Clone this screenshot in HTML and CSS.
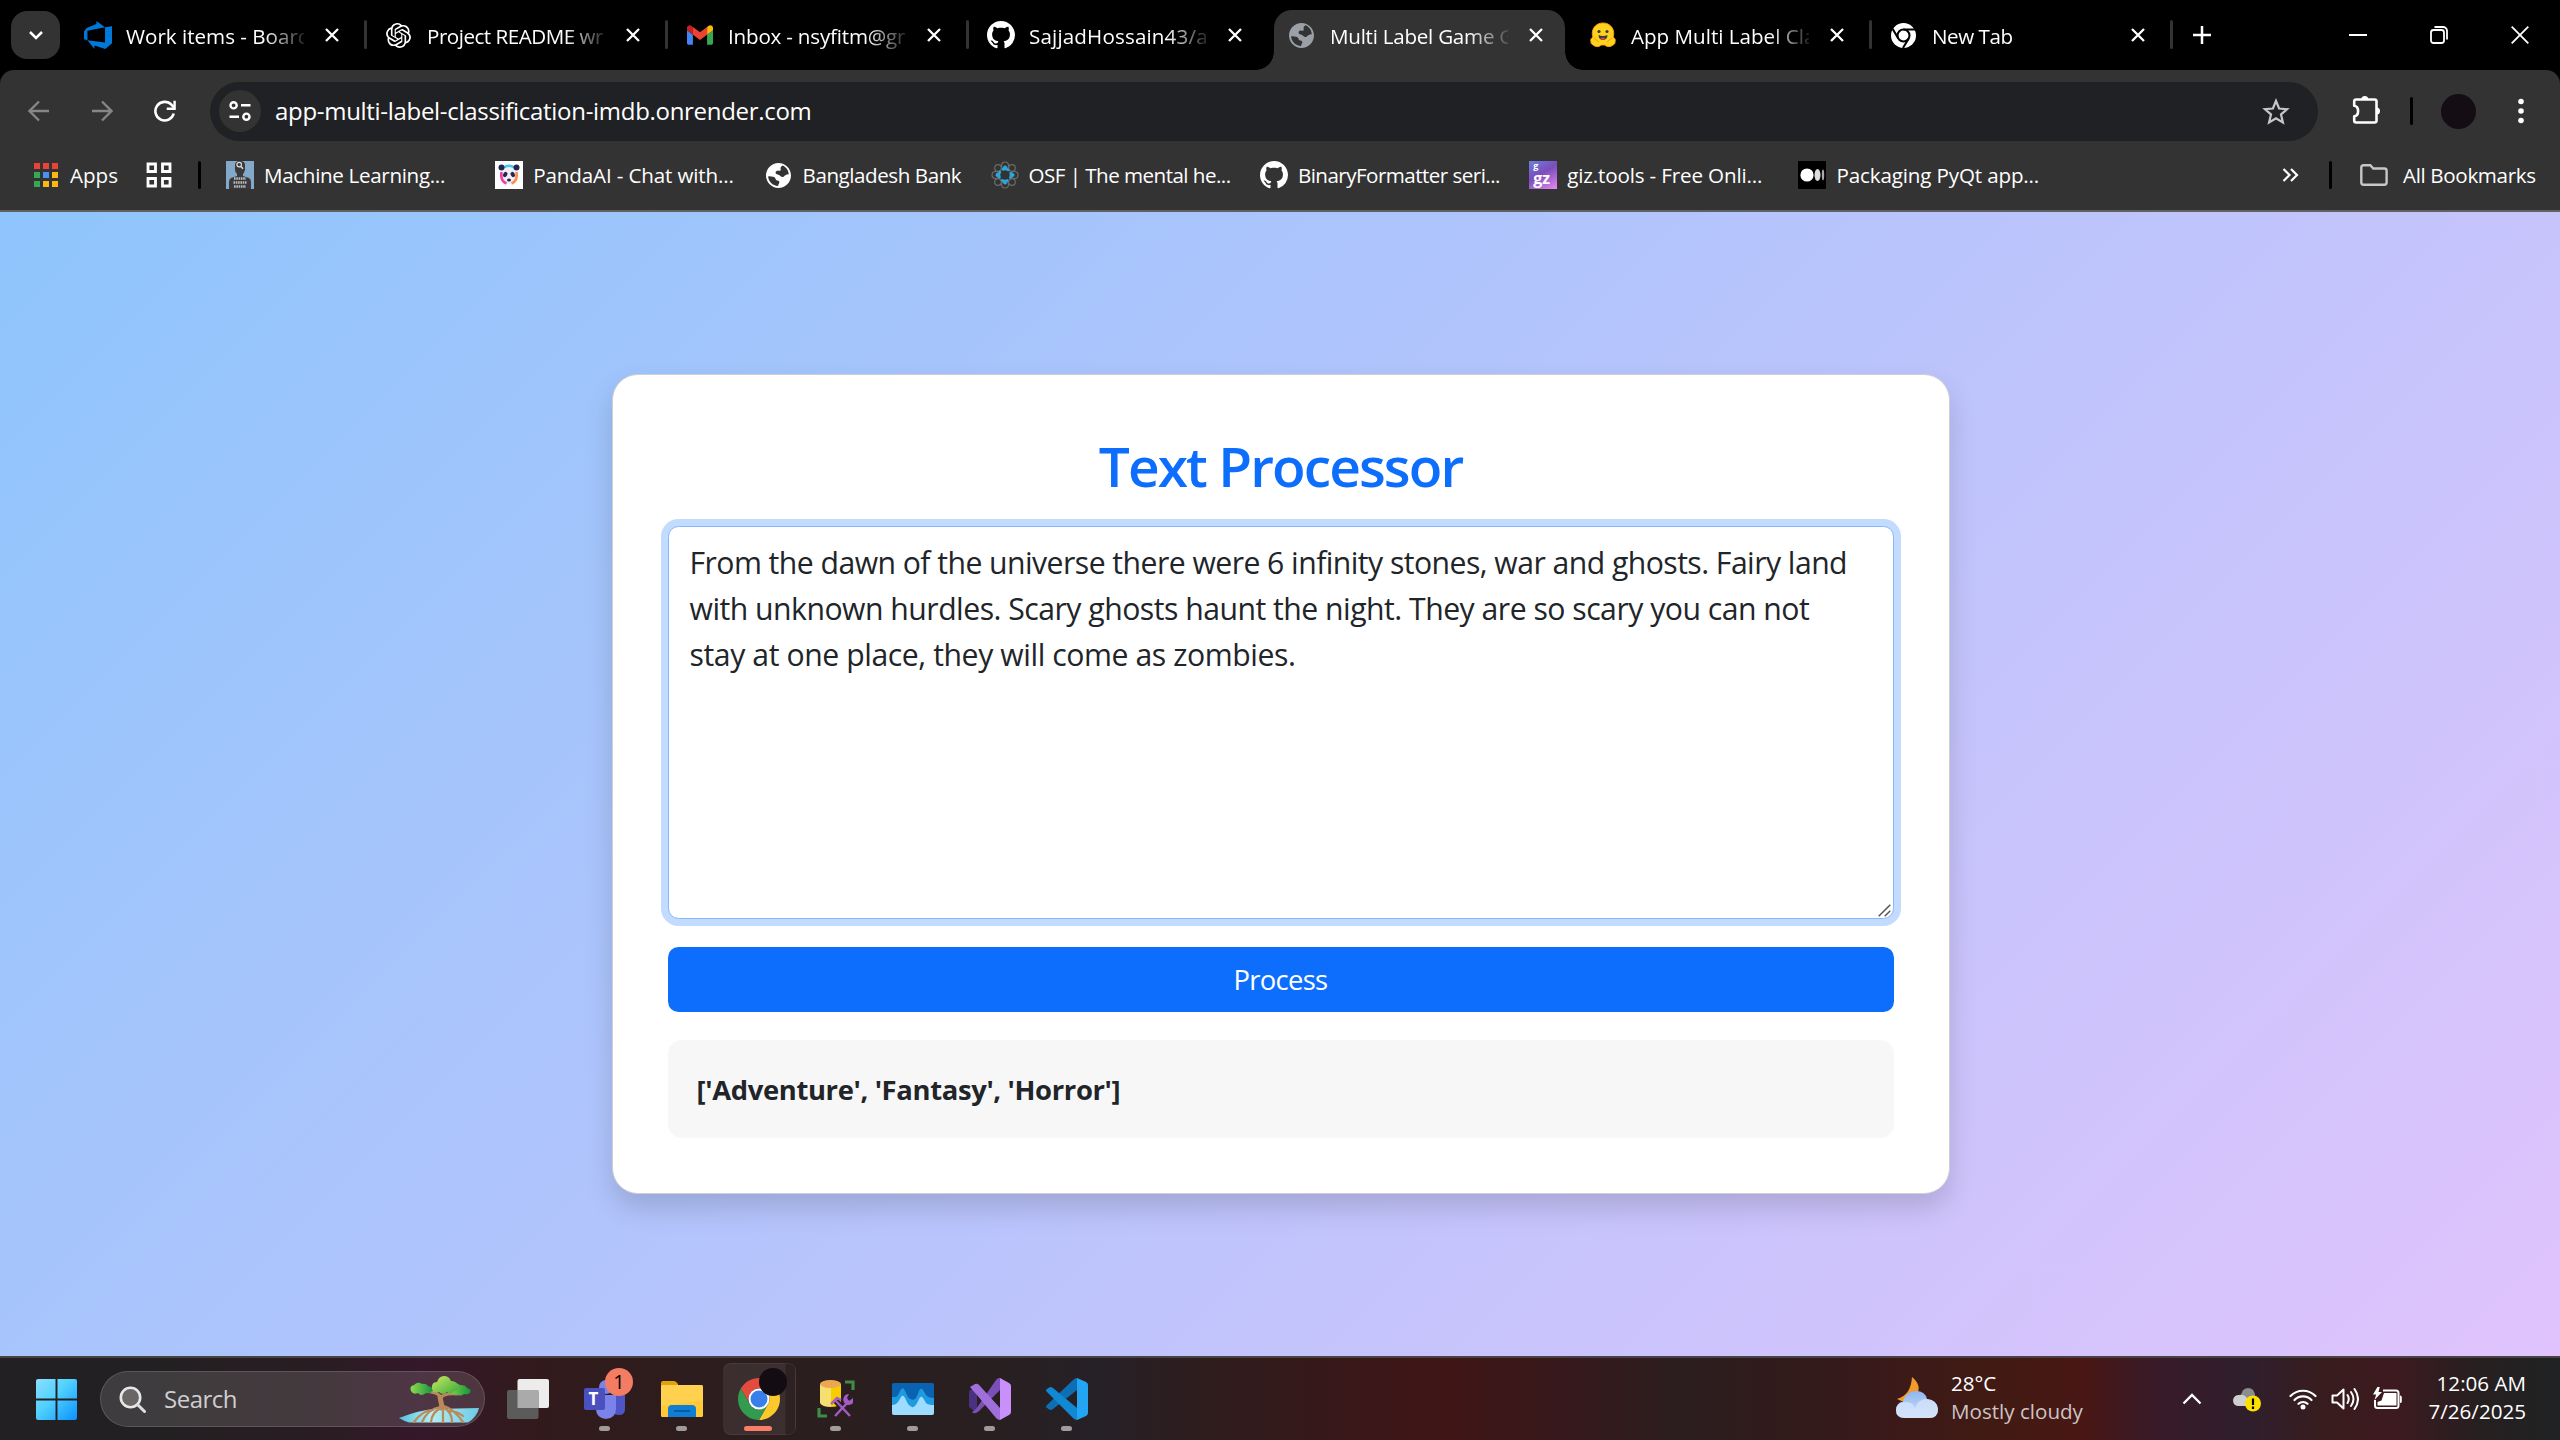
FILE: index.html
```html
<!DOCTYPE html>
<html lang="en">
<head>
<meta charset="utf-8">
<title>Multi Label Game Classification</title>
<link rel="stylesheet" href="styles.css">
</head>
<body>
<svg class="defs" width="0" height="0" aria-hidden="true">
  <symbol id="github" viewBox="0 0 16 16"><path fill="#fff" d="M8 0C3.58 0 0 3.58 0 8c0 3.54 2.29 6.53 5.47 7.59.4.07.55-.17.55-.38 0-.19-.01-.82-.01-1.49-2.01.37-2.53-.49-2.69-.94-.09-.23-.48-.94-.82-1.13-.28-.15-.68-.52-.01-.53.63-.01 1.08.58 1.23.82.72 1.21 1.87.87 2.33.66.07-.52.28-.87.51-1.07-1.78-.2-3.64-.89-3.64-3.95 0-.87.31-1.59.82-2.15-.08-.2-.36-1.02.08-2.12 0 0 .67-.21 2.2.82.64-.18 1.32-.27 2-.27s1.36.09 2 .27c1.53-1.04 2.2-.82 2.2-.82.44 1.1.16 1.92.08 2.12.51.56.82 1.27.82 2.15 0 3.07-1.87 3.75-3.65 3.95.29.25.54.73.54 1.48 0 1.07-.01 1.93-.01 2.2 0 .21.15.46.55.38A8.01 8.01 0 0 0 16 8c0-4.42-3.58-8-8-8z"/></symbol>
  <symbol id="globe" viewBox="2 2 20 20"><path fill="currentColor" d="M12 2C6.48 2 2 6.48 2 12s4.48 10 10 10 10-4.480 10-10S17.520 2 12 2zm-.3 18.300C7.200 20.100 3.900 16.700 3.700 12.500c1.500.3 3.500.1 4.800.7 1.100.5 1 2 1.900 2.500.8.4 2.300.2 2.300 1.400 0 1.300-1 1.700-1 3.200zm4.600-7.600c-1.400 1-2.400.2-3.200-.7-.9-1-2.300-.7-3.100-1.500-.9-1 .1-2.300 1.300-2.400 1-.1 1.700.6 2.300-.2.600-.9-.4-1.500.2-2.600.3-.6.9-1 1.400-1.400 2.900 1.100 5 4 5 7.300-1.100-.6-2.600.6-3.900 1.500z"/></symbol>
  <symbol id="close" viewBox="0 0 14 14"><path d="M1 1l12 12M13 1L1 13" stroke="#fff" stroke-width="2.300" fill="none"/></symbol>
</svg>

<header class="tabstrip">
  <button class="tab-search"><svg width="16" height="10" viewBox="0 0 16 10"><path d="M2 2l6 6 6-6" fill="none" stroke="#fff" stroke-width="2.500"/></svg></button>
  <div class="tabs">
    <div class="tab">
      <svg class="fav" width="28" height="28" viewBox="0 0 24 24"><path fill="#0078d7" d="M0 8.899l2.247-2.966 8.405-3.416V.045l7.370 5.393L2.966 8.360v8.224L0 15.730zm24-4.450v14.652L18.247 24l-9.303-3.056V24l-5.978-7.416 15.057 1.798V5.438z"/></svg>
      <span class="tab-title"><span class="t">Work items - Board</span></span><svg class="x" width="14" height="14"><use href="#close"/></svg>
    </div>
    <div class="tab">
      <svg class="fav" width="25" height="25" viewBox="0 0 24 24"><path fill="#fff" d="M22.2819 9.8211a5.9847 5.9847 0 0 0-.5157-4.9108 6.0462 6.0462 0 0 0-6.5098-2.9A6.0651 6.0651 0 0 0 4.9807 4.1818a5.9847 5.9847 0 0 0-3.9977 2.9 6.0462 6.0462 0 0 0 .7427 7.0966 5.98 5.98 0 0 0 .511 4.9107 6.051 6.051 0 0 0 6.5146 2.9001A5.9847 5.9847 0 0 0 13.2599 24a6.0557 6.0557 0 0 0 5.7718-4.2058 5.9894 5.9894 0 0 0 3.9977-2.9001 6.0557 6.0557 0 0 0-.7475-7.0729zm-9.022 12.6081a4.4755 4.4755 0 0 1-2.8764-1.0408l.1419-.0804 4.7783-2.7582a.7948.7948 0 0 0 .3927-.6813v-6.7369l2.02 1.1686a.071.071 0 0 1 .038.052v5.5826a4.504 4.504 0 0 1-4.4945 4.4944zm-9.6607-4.1254a4.4708 4.4708 0 0 1-.5346-3.0137l.142.0852 4.783 2.7582a.7712.7712 0 0 0 .7806 0l5.8428-3.3685v2.3324a.0804.0804 0 0 1-.0332.0615L9.74 19.9502a4.4992 4.4992 0 0 1-6.1408-1.6464zM2.3408 7.8956a4.485 4.485 0 0 1 2.3655-1.9728V11.6a.7664.7664 0 0 0 .3879.6765l5.8144 3.3543-2.0201 1.1685a.0757.0757 0 0 1-.071 0l-4.8303-2.7865A4.504 4.504 0 0 1 2.3408 7.872zm16.5963 3.8558L13.1038 8.364 15.1192 7.2a.0757.0757 0 0 1 .071 0l4.8303 2.7913a4.4944 4.4944 0 0 1-.6765 8.1042v-5.6772a.79.79 0 0 0-.407-.667zm2.0107-3.0231l-.142-.0852-4.7735-2.7818a.7759.7759 0 0 0-.7854 0L9.409 9.2297V6.8974a.0662.0662 0 0 1 .0284-.0615l4.8303-2.7866a4.4992 4.4992 0 0 1 6.6802 4.66zM8.3065 12.863l-2.02-1.1638a.0804.0804 0 0 1-.038-.0567V6.0742a4.4992 4.4992 0 0 1 7.3757-3.4537l-.142.0805L8.704 5.459a.7948.7948 0 0 0-.3927.6813zm1.0976-2.3654l2.602-1.4998 2.6069 1.4998v2.9994l-2.5974 1.4997-2.6067-1.4997Z"/></svg>
      <span class="tab-title"><span class="t">Project README wr</span></span><svg class="x" width="14" height="14"><use href="#close"/></svg>
    </div>
    <div class="tab">
      <svg class="fav" width="26" height="20" viewBox="52 42 88 66"><path fill="#4285f4" d="M58 108h14V74L52 59v43c0 3.320 2.690 6 6 6"/><path fill="#34a853" d="M120 108h14c3.320 0 6-2.690 6-6V59l-20 15"/><path fill="#fbbc04" d="M120 48v26l20-15v-8c0-7.420-8.470-11.650-14.400-7.200"/><path fill="#ea4335" d="M72 74V48l24 18 24-18v26L96 92"/><path fill="#c5221f" d="M52 51v8l20 15V48l-5.600-4.200c-5.940-4.450-14.400-.22-14.400 7.200"/></svg>
      <span class="tab-title"><span class="t">Inbox - nsyfitm@gr</span></span><svg class="x" width="14" height="14"><use href="#close"/></svg>
    </div>
    <div class="tab no-sep">
      <svg class="fav" width="28" height="28"><use href="#github"/></svg>
      <span class="tab-title"><span class="t">SajjadHossain43/ap</span></span><svg class="x" width="14" height="14"><use href="#close"/></svg>
    </div>
    <div class="tab active">
      <svg class="fav gray" width="25" height="25"><use href="#globe"/></svg>
      <span class="tab-title"><span class="t">Multi Label Game G</span></span><svg class="x" width="14" height="14"><use href="#close"/></svg>
    </div>
    <div class="tab">
      <svg class="fav" width="28" height="28" viewBox="0 0 28 28"><path fill="#ffd21e" stroke="#ff9d0b" stroke-width="1" d="M14 2C7.800 2 3.300 6.500 3.300 12.300c0 1.600.2 2.800.6 3.900-2 1-2.700 3-1.900 4.600-.3 1.500.6 2.600 1.800 3 1.900 2.200 6.600 2.500 8.200.2h4c1.600 2.300 6.300 2 8.200-.2 1.200-.4 2.100-1.500 1.800-3 .8-1.600.1-3.600-1.900-4.600.4-1.100.6-2.300.6-3.900C24.700 6.500 20.200 2 14 2z"/><circle cx="10" cy="10.500" r="1.600" fill="#3a3b45"/><circle cx="18" cy="10.500" r="1.600" fill="#3a3b45"/><path fill="#3a3b45" d="M9.500 14c2.500 1.300 6.500 1.300 9 0 0 3.200-2 5-4.500 5s-4.500-1.800-4.500-5z"/><path fill="#f94040" d="M11.500 17.700c1-1.200 4-1.200 5 0-1.300 1.500-3.700 1.500-5 0z"/><path d="M5 17l5 4M23 17l-5 4" stroke="#ff9d0b" stroke-width="1" fill="none"/></svg>
      <span class="tab-title"><span class="t">App Multi Label Cla</span></span><svg class="x" width="14" height="14"><use href="#close"/></svg>
    </div>
    <div class="tab">
      <svg class="fav" width="25" height="25" viewBox="0 0 48 48"><circle cx="24" cy="24" r="24" fill="#fff"/><circle cx="24" cy="24" r="11.500" fill="none" stroke="#000" stroke-width="4"/><path d="M24 12.500h22M14 29.800L3 11M34 29.800L23 48" stroke="#000" stroke-width="4"/></svg>
      <span class="tab-title"><span class="t">New Tab</span></span><svg class="x" width="14" height="14"><use href="#close"/></svg>
    </div>
  </div>
  <svg class="new-tab" width="18" height="18" viewBox="0 0 18 18"><path d="M9 0v18M0 9h18" stroke="#fff" stroke-width="2.500"/></svg>
  <div class="win-controls">
    <svg width="18" height="18" viewBox="0 0 18 18"><path d="M0 9h18" stroke="#fff" stroke-width="2"/></svg>
    <svg width="18" height="18" viewBox="0 0 18 18"><rect x="1" y="4" width="13" height="13" rx="2.500" fill="none" stroke="#fff" stroke-width="1.800"/><path d="M4.500 1H13a4 4 0 0 1 4 4v8.500" fill="none" stroke="#fff" stroke-width="1.800"/></svg>
    <svg width="18" height="18" viewBox="0 0 18 18"><path d="M.7.7l16.600 16.600M17.300.7L.7 17.300" stroke="#fff" stroke-width="1.800"/></svg>
  </div>
</header>

<section class="chrome-ui">
  <div class="toolbar">
    <div class="nav">
      <svg width="22" height="22" viewBox="0 0 22 22"><path d="M21 11H2M11 1.500L1.500 11l9.500 9.500" fill="none" stroke="#868686" stroke-width="2.300"/></svg>
      <svg width="22" height="22" viewBox="0 0 22 22"><path d="M1 11h19M11 1.500l9.500 9.500-9.500 9.500" fill="none" stroke="#868686" stroke-width="2.300"/></svg>
      <svg width="22" height="22" viewBox="0 0 22 22"><path d="M19.700 13.500a9.300 9.300 0 1 1-2.300-8.800L20 7.300" fill="none" stroke="#fff" stroke-width="2.600"/><path d="M20.600.8v7.900h-7.900" fill="none" stroke="#fff" stroke-width="2.400"/></svg>
    </div>
    <div class="omnibox">
      <span class="site-info"><svg width="22" height="20" viewBox="0 0 22 20"><g fill="none" stroke="#fff" stroke-width="2.400"><circle cx="4.600" cy="4.300" r="3.100"/><path d="M12 4.300h9.500M.5 15.700H10"/><circle cx="17.400" cy="15.700" r="3.100"/></g></svg></span>
      <span class="url"><span class="t">app-multi-label-classification-imdb.onrender.com</span></span>
      <svg class="star" width="28" height="27" viewBox="0 0 28 27"><path d="M14 3l3.100 7.500 8 .7-6.100 5.300 1.900 7.900-6.900-4.200-6.900 4.200L9 16.500l-6.100-5.300 8-.7z" fill="none" stroke="#c7c7c7" stroke-width="2.200"/></svg>
    </div>
    <svg class="ext" width="30" height="30" viewBox="0 0 30 30"><path d="M3.200 10.700V6.500q0-2 2-2h18.300q2 0 2 2v19q0 2-2 2H5.200q-2 0-2-2v-4.200c5.200-.6 5.200-10 0-10.600z" fill="none" stroke="#fff" stroke-width="2.600" stroke-linejoin="round"/><path d="M10.300 4.500a3.500 3.500 0 0 1 7 0zM25.500 12.500a3.500 3.500 0 0 1 0 7z" fill="#fff"/></svg>
    <i class="divider"></i>
    <i class="avatar"></i>
    <svg class="menu" width="6" height="26" viewBox="0 0 6 26"><g fill="#fff"><circle cx="3" cy="3.500" r="2.800"/><circle cx="3" cy="13" r="2.800"/><circle cx="3" cy="22.500" r="2.800"/></g></svg>
  </div>
  <nav class="bookmarks">
    <a class="bm-apps"><svg width="24" height="24" viewBox="0 0 24 24"><path fill="#ea4335" d="M0 0h6v6H0zM9 0h6v6H9zM18 0h6v6h-6z"/><path fill="#34a853" d="M0 9h6v6H0zM0 18h6v6H0z"/><path fill="#4a90f5" d="M9 9h6v6H9z"/><path fill="#fbb713" d="M18 9h6v6h-6zM9 18h6v6H9zM18 18h6v6h-6z"/></svg><span class="t">Apps</span></a>
    <svg class="bm-grid" width="26" height="26" viewBox="0 0 26 26"><path d="M2 2h7.500v7.500H2zM16.500 2H24v7.500h-7.500zM2 16.500h7.500V24H2zM16.500 16.500H24V24h-7.500z" fill="none" stroke="#fff" stroke-width="2.800"/></svg>
    <i class="divider"></i>
    <div class="bm-list">
      <a><svg width="28" height="28" viewBox="0 0 28 28"><path fill="#82a9c9" d="M0 0h28v28H0z"/><path fill="#3a3a3c" d="M9 4q0-4 5-4t5 4v5q-1 3-2 4v2l6 2q2 1 2 4v7H3v-7q0-3 2-4l6-2v-2q-2-2-2-4z"/><circle cx="13.200" cy="3.600" r="2.300" fill="none" stroke="#ddd" stroke-width="1.200"/><path d="M15 5.500l2 2.300" stroke="#ddd" stroke-width="1.500"/><path d="M8 17.500h12M7.500 21.500h13M8 25.500h12" stroke="#bbb" stroke-width="2.400" stroke-dasharray="1.600 .7"/></svg><span class="t">Machine Learning...</span></a>
      <a><svg width="28" height="28" viewBox="0 0 28 28"><path fill="#fff" d="M0 0h28v28H0z"/><circle cx="14" cy="14.500" r="8.500" fill="#f2eef4"/><path d="M6.500 11q-1.500 9 5 11.500" stroke="#f23ba5" stroke-width="2.600" fill="none"/><path d="M21.500 11q1.500 9-5 11.500" stroke="#ff8a4c" stroke-width="2.600" fill="none"/><path d="M8.500 6.500q5.500-3.500 11 0" stroke="#42c9ee" stroke-width="2.600" fill="none"/><circle cx="6.500" cy="6.500" r="3" fill="#232650"/><circle cx="21.500" cy="6.500" r="3" fill="#232650"/><ellipse cx="10.200" cy="13.500" rx="2" ry="2.700" fill="#262650" transform="rotate(30 10.200 13.500)"/><ellipse cx="17.800" cy="13.500" rx="2" ry="2.700" fill="#262650" transform="rotate(-30 17.800 13.500)"/><ellipse cx="14" cy="19" rx="2" ry="1.500" fill="#262650"/></svg><span class="t">PandaAI - Chat with...</span></a>
      <a><svg width="25" height="25" class="white"><use href="#globe"/></svg><span class="t">Bangladesh Bank</span></a>
      <a><svg width="28" height="28" viewBox="0 0 28 28"><g fill="none" stroke="#6b6b6b" stroke-width="1.200"><circle cx="14" cy="4.500" r="3.500"/><circle cx="14" cy="23.500" r="3.500"/><circle cx="4.500" cy="14" r="3.500"/><circle cx="23.500" cy="14" r="3.500"/><circle cx="7" cy="7" r="3.300"/><circle cx="21" cy="7" r="3.300"/><circle cx="7" cy="21" r="3.300"/><circle cx="21" cy="21" r="3.300"/></g><circle cx="14" cy="14" r="6" fill="none" stroke="#2ba8e0" stroke-width="2.600" stroke-dasharray="7.400 2" stroke-dashoffset="3.700"/><g fill="#2ba8e0"><circle cx="14" cy="6.500" r="2"/><circle cx="14" cy="21.500" r="2"/><circle cx="6.500" cy="14" r="2"/><circle cx="21.500" cy="14" r="2"/></g></svg><span class="t">OSF | The mental he...</span></a>
      <a><svg width="28" height="28"><use href="#github"/></svg><span class="t">BinaryFormatter seri...</span></a>
      <a><span class="giz"><small>g</small><b>gz</b></span><span class="t">giz.tools - Free Onli...</span></a>
      <a><svg width="28" height="28" viewBox="0 0 28 28"><path d="M0 0h28v28H0z"/><circle cx="9" cy="14" r="6.600" fill="#fff"/><ellipse cx="19.500" cy="14" rx="3" ry="6" fill="#ddd"/><ellipse cx="25" cy="14" rx="1.200" ry="5.400" fill="#aaa"/></svg><span class="t">Packaging PyQt app...</span></a>
    </div>
    <svg class="more" width="17" height="14" viewBox="0 0 17 14"><path d="M1.500 1l6 6-6 6M9 1l6 6-6 6" fill="none" stroke="#fff" stroke-width="2.200"/></svg>
    <i class="divider"></i>
    <a class="all"><svg width="28" height="22" viewBox="0 0 28 22"><path d="M1.300 18.500v-15Q1.300 1.300 3.500 1.300h6.800l3 3.200h11q2.300 0 2.300 2.200v11.800q0 2.200-2.300 2.200H3.500q-2.200 0-2.200-2.200z" fill="none" stroke="#c7c7c7" stroke-width="2.400"/></svg><span class="t">All Bookmarks</span></a>
  </nav>
</section>

<main class="page">
  <div class="card">
    <h2><span class="t">Text Processor</span></h2>
    <div class="field">
      <div class="input" role="textbox"><span class="t">From the dawn of the universe there were 6 infinity stones, war and ghosts. Fairy land</span><br><span class="t">with unknown hurdles. Scary ghosts haunt the night. They are so scary you can not</span><br><span class="t">stay at one place, they will come as zombies.</span></div>
      <svg class="grip" width="13" height="13" viewBox="0 0 13 13"><path d="M.7 12.300L12.300.7M6.700 12.300l5.600-5.600" stroke="#555" stroke-width="1.500"/></svg>
    </div>
    <button class="process"><span class="t">Process</span></button>
    <div class="result"><span class="t">['Adventure', 'Fantasy', 'Horror']</span></div>
  </div>
</main>

<footer class="taskbar">
  <svg class="start" width="41" height="41" viewBox="0 0 42 42"><defs><linearGradient id="win" x1="0" y1="0" x2="42" y2="42" gradientUnits="userSpaceOnUse"><stop offset="0" stop-color="#8ae0ff"/><stop offset=".45" stop-color="#4fd0ff"/><stop offset="1" stop-color="#0a91ff"/></linearGradient></defs><path fill="url(#win)" d="M2 0h18v20H0V2q0-2 2-2zM22 0h18q2 0 2 2v18H22zM0 22h20v20H2q-2 0-2-2zM22 22h20v18q0 2-2 2H22z"/></svg>
  <div class="search">
    <svg width="27" height="27" viewBox="0 0 27 27"><circle cx="11.500" cy="11.500" r="9.700" fill="#6a6666" stroke="#e8e8e8" stroke-width="2.600"/><path d="M18.500 18.500l7 7" stroke="#e0e0e0" stroke-width="3" stroke-linecap="round"/></svg>
    <span class="t">Search</span>
    <svg class="tree" width="80" height="47" viewBox="0 0 80 47">
      <defs><linearGradient id="leaf" x1="0" x2="1"><stop offset="0" stop-color="#8fdb4e"/><stop offset="1" stop-color="#16953d"/></linearGradient><linearGradient id="leaf2" x1="0" x2="1" y1="0" y2="1"><stop offset="0" stop-color="#c9ea62"/><stop offset="1" stop-color="#3dab3a"/></linearGradient><linearGradient id="water" x1="0" x2="1"><stop offset="0" stop-color="#55c0de"/><stop offset=".4" stop-color="#b4edf0"/><stop offset="1" stop-color="#6ccbe6"/></linearGradient></defs>
      <path fill="url(#water)" d="M0 42q20-8 36-9l44-1q-2 9-11 14.500H10Q5 45 0 42z"/>
      <g fill="none" stroke="#b9895a" stroke-linecap="round"><path d="M42 33V21M42 22q-2-5-10-6-6-1-8-3M42 24q-1-7 16-6" stroke-width="3"/><path d="M43 31l-2-10" stroke-width="5"/><path d="M41 31q-12 2-18 15M42 32q-9 4-10 14M44 33v13M45 32q8 4 8 14M45 30q10 3 19 16M50 35q8 0 14 5M34 34q-10 0-19 12" stroke-width="2.200"/></g>
      <path fill="url(#leaf)" d="M12 15q-2-5 3-6 4-4 8-1 4-1 6 2 6 1 4 5-1 3-6 2-5 4-8 0-5 2-7-2z"/>
      <path fill="url(#leaf)" d="M47 15q0-7 6-7 5-2 8 1 6 0 7 3 5 1 3 5-3 2-6 1-4 3-8 0-5 1-10-3z"/>
      <path fill="url(#leaf2)" d="M33 13q-1-7 5-7 2-6 7-6t7 5q5 0 7 4 1 6-4 6-3 4-7 1-4 4-8 0-6 2-7-3z"/>
    </svg>
  </div>
  <div class="apps">
    <div class="app"><svg width="42" height="40" viewBox="0 0 42 40"><rect x="10.500" y="0" width="31.500" height="29" rx="2" fill="#ececec"/><rect x="0" y="11" width="31.500" height="29" rx="2" fill="#5b5b5b"/><path d="M10.500 11h21v18h-21z" fill="#aaa"/></svg></div>
    <div class="app running"><svg width="42" height="42" viewBox="0 0 42 42"><circle cx="22" cy="9" r="7" fill="#7b83eb"/><path fill="#4f55c4" d="M30 17h11v14q0 6-6 6-5 0-8-4z"/><path fill="#7b83eb" d="M12 17h20v14q0 9-10 10-10-1-10-10z"/><rect x="0" y="10" width="21" height="22" rx="2" fill="#4a50bd"/></svg><span class="teams-t">T</span><span class="badge">1</span></div>
    <div class="app running"><svg width="42" height="38" viewBox="0 0 42 38"><path fill="#e2a20c" d="M0 3q0-2 2-2h11q2 0 4 3v6H0z"/><rect y="5" width="42" height="32" rx="1.500" fill="#ffc937"/><path fill="#ffd965" d="M0 6.500Q0 5 1.500 5h39Q42 5 42 6.500V20L0 26z" opacity=".5"/><path fill="#0f7fd4" d="M7 37V29q0-4 4-4h20q4 0 4 4v8z"/><path d="M13 31h16" stroke="#0b5aa5" stroke-width="2"/></svg></div>
    <div class="app current"><svg width="42" height="42" viewBox="0 0 48 48"><path fill="#e33b2e" d="M24 12h20.780A24 24 0 0 0 3.215 12.003L13.608 30A11.985 11.985 0 0 1 24 12z"/><path fill="#fcc419" d="M34.391 30.003L24 48A24 24 0 0 0 44.780 12H24a11.985 11.985 0 0 1 10.391 18.003z"/><path fill="#229342" d="M13.609 30.003L3.218 12.006A24 24 0 0 0 24.003 48l10.393-17.997a11.985 11.985 0 0 1-20.787 0z"/><circle cx="24" cy="24" r="12" fill="#fff"/><circle cx="24" cy="24" r="9.700" fill="#2775ea"/></svg><i class="profile"></i></div>
    <div class="app running"><svg width="40" height="40" viewBox="0 0 40 40"><path d="M29 3h8v8M3 29v8h8" fill="none" stroke="#3f8c46" stroke-width="3.200"/><path fill="#f6df70" d="M4 5v19q2 4 11 4V5z"/><path fill="#f7cc00" d="M15 5h10v19q-2 4-10 4z"/><ellipse cx="14.500" cy="5" rx="10.500" ry="4" fill="#eca750"/><g stroke="#2b1f20" stroke-width="6"><path d="M20 37l15-16M20 22l14 15"/></g><g stroke="#a45bc6" stroke-width="2.400" fill="none"><path d="M19 37l14-15M20 22l14 15M15 25l6-6 4 2"/><path d="M37 19l-4 3-2-3 2-4a5.500 5.500 0 1 0 4 9z" fill="#a45bc6" stroke="none"/></g></svg></div>
    <div class="app running"><svg width="42" height="32" viewBox="0 0 42 32"><rect width="42" height="32" rx="2" fill="#0b62b0"/><path fill="#1f9ae0" d="M0 14h4q2-1 4-6 2-4 4-2l4 8q3 4 7 2 2-2 4-8 2-4 4-1l3 5q2 3 8 3v9H0z"/><path fill="#9edcff" d="M0 22q4 0 6-3l3-5q2-3 4 1l3 6q4 5 7 2 2-2 4-7 2-4 4-1l3 5q2 2 8 2v8q0 2-2 2H2q-2 0-2-2z"/></svg></div>
    <div class="app running"><svg width="42" height="42" viewBox="0 0 42 42"><path fill="#4b3280" d="M0 13l4-2q3-2 4-1v24q-1 0-4-2l-4-3z"/><path fill="#7a50b8" d="M4 35Q2 34 7 31L27 2q3-3 4-2v12L12 31q-4 5-8 4z"/><path fill="#a06fdb" d="M1 9l5-3q3-1 5 2l20 22v12q-2 0-4-2L8 17Q5 14 1 9z"/><path fill="#c990fb" d="M31 0l9 5q2 1 2 3v26q0 2-2 3l-9 5z"/></svg></div>
    <div class="app running"><svg width="42" height="42" viewBox="0 0 42 42"><path fill="#0c6fb3" d="M1 27q-2 2 0 3l3 2q2 0 3-1L31 12V0q-2 0-4 2z"/><path fill="#1088d3" d="M1 14q-2-2 0-3l3-2q2 0 3 1l24 20v12q-2 0-4-2z"/><path fill="#24a5f3" d="M31 0l9 4q2 1 2 3v28q0 2-2 3l-9 4z"/></svg></div>
  </div>
  <div class="weather">
    <svg width="42" height="54" viewBox="0 0 42 54"><defs><linearGradient id="cloud" x1="0" y1="0" x2="0" y2="1"><stop offset="0" stop-color="#8fb6ef"/><stop offset="1" stop-color="#cddff8"/></linearGradient></defs><path fill="#f29b2b" d="M16 5q10 8 5 18-8 11-20 4 14-4 15-22z"/><path fill="url(#cloud)" d="M9 46Q0 46 0 38q0-7 7-8.500Q10 19 20 19q9 0 11 8 10 1 11 10 0 9-9 9z"/><path fill="#d5e4fa" opacity=".8" d="M9 46Q0 46 0 38q1-8 10-8 7 0 9 6 3-9 12-9 10 1 11 10 0 9-9 9z"/></svg>
    <div class="lines"><span class="t">28°C</span><span class="t dim">Mostly cloudy</span></div>
  </div>
  <div class="tray">
    <svg class="chev" width="20" height="12" viewBox="0 0 20 12"><path d="M1.500 10.500L10 2l8.500 8.500" fill="none" stroke="#fff" stroke-width="2.300"/></svg>
    <svg class="cloud" width="28" height="26" viewBox="0 0 28 26"><path fill="#8c8c8c" d="M8 12Q8 2 15 2q6 0 7 7v7H8z"/><path fill="#d0cfd0" d="M6 20q-6 0-6-6 1-5 6-5 5-1 8 3l4 8z"/><circle cx="20" cy="17.500" r="8" fill="#fce100"/><path d="M20 12.500v6.500M20 20.500v2.500" stroke="#000" stroke-width="2.200"/></svg>
    <svg class="wifi" width="28" height="22" viewBox="0 0 28 22"><g fill="none" stroke="#fff" stroke-width="2.200" stroke-linecap="round"><path d="M1.500 8a17.500 17.500 0 0 1 25 0M5.500 12a12 12 0 0 1 17 0M9.500 15.800a6.500 6.500 0 0 1 9 0"/></g><circle cx="14" cy="19" r="2.500" fill="#fff"/></svg>
    <svg class="vol" width="28" height="24" viewBox="0 0 28 24"><g fill="none" stroke="#fff" stroke-width="2" stroke-linecap="round" stroke-linejoin="round"><path d="M1.500 8.500v7h4.500l6.500 6v-19L6 8.500zM16.500 8q2.500 4 0 8M20 5q5 7 0 14M23.500 2q7 10 0 20"/></g></svg>
    <svg class="bat" width="29" height="24" viewBox="0 0 29 24"><path d="M10 3.500h13q2.500 0 2.500 2.500v12.500Q25.500 21 23 21H4.500Q2 21 2 18.500V13" fill="none" stroke="#fff" stroke-width="2"/><path fill="#fff" d="M11 6h12.500v12.500H4.500V15l4-1.500zM27 8.500q1.800 0 1.800 1.500v4.500q0 1.500-1.800 1.500zM5-1L0 7.500h3.200L1.500 13 9 5H5.500L7-1z"/></svg>
    <div class="lines clock"><span class="t">12:06 AM</span><span class="t">7/26/2025</span></div>
  </div>
</footer>
</body>
</html>
```
FILE: styles.css
```css
* { box-sizing: border-box; }
html, body { margin: 0; width: 2560px; height: 1440px; overflow: hidden; }
body {
  display: flex;
  flex-direction: column;
  background: #000;
  color: #fff;
  font-family: "Open Sans", "Noto Sans", sans-serif;
  font-size: 20.6px;
}
svg { display: block; flex: none; }
button { font: inherit; border: 0; padding: 0; margin: 0; color: inherit; }
.t { white-space: pre; }
.defs { position: absolute; }
.gray { color: #9aa0a6; }
.white { color: #fff; }

/* Tab strip */
.tabstrip { display: flex; align-items: center; height: 70px; flex: none; padding-left: 11px; background: #000; }
.tab-search { display: grid; place-items: center; width: 49px; height: 48px; margin-right: 6px; border-radius: 16px; background: #333; }
.tabs { display: flex; align-self: stretch; }
.tab { position: relative; display: flex; align-items: center; width: 301px; padding-left: 18px; }
.fav { margin-right: 14px; }
.fav[width="25"] { margin: 0 16px 0 1px; }
.fav[width="26"] { margin: 0 15px 0 1px; }
.tab-title {
  width: 178px;
  padding-top: 2px;
  overflow: hidden;
  -webkit-mask-image: linear-gradient(90deg, #000 138px, transparent 184px);
  mask-image: linear-gradient(90deg, #000 138px, transparent 184px);
}
.tab:nth-child(2) .t { letter-spacing: -.5px; }
.tab:nth-child(3) .t { letter-spacing: -.2px; }
.tab:nth-child(4) .t { letter-spacing: .15px; }
.tab:nth-child(5) .t { letter-spacing: -.25px; }
.tab:nth-child(7) .t { letter-spacing: -.45px; }
.tab .x { margin-left: 21px; }
.tab:not(.active):not(.no-sep)::after { content: ""; position: absolute; right: 0; top: 20px; width: 3px; height: 29px; border-radius: 2px; background: #333; }
.tab.active::before {
  content: "";
  position: absolute;
  z-index: -1;
  left: 4px;
  top: 10px;
  width: 291px;
  height: 60px;
  border-radius: 18px 18px 0 0;
  background: #333;
}
.tab.active { z-index: 1; }
.tab.active::after {
  content: "";
  position: absolute;
  z-index: -1;
  left: -14px;
  bottom: 0;
  width: 327px;
  height: 18px;
  background:
    radial-gradient(circle 18px at 0 0, transparent 17.5px, #333 18px) left / 18px 18px no-repeat,
    radial-gradient(circle 18px at 18px 0, transparent 17.5px, #333 18px) right / 18px 18px no-repeat;
}
.new-tab { margin-left: 20px; }
.win-controls { display: flex; gap: 63px; margin-left: auto; padding-right: 31px; }

/* Toolbar */
.chrome-ui { height: 142px; flex: none; border-bottom: 2px solid #616161; border-radius: 14px 14px 0 0; background: #333; }
.toolbar { display: flex; align-items: center; height: 82px; padding-left: 28px; }
.nav { display: flex; flex: none; gap: 41px; width: 182px; }
.omnibox { display: flex; flex: none; align-items: center; width: 2108px; height: 59px; padding: 0 28px 0 9px; border-radius: 30px; background: #202124; }
.site-info { display: grid; place-items: center; width: 42px; height: 42px; border-radius: 50%; background: #333; }
.url { margin: -1px 0 0 14px; font-size: 24px; letter-spacing: -.3px; }
.star { margin-left: auto; }
.ext { margin: -3px 0 0 33px; }
.divider { width: 3px; height: 28px; flex: none; border-radius: 2px; background: #000; }
.toolbar .divider { margin-left: 29px; }
.avatar { width: 35px; height: 35px; margin-left: 28px; border-radius: 50%; background: #150d14; }
.menu { margin-left: 42px; }

/* Bookmarks */
.bookmarks { display: flex; align-items: center; height: 46px; padding-left: 34px; }
.bookmarks a { display: flex; flex: none; align-items: center; }
.bookmarks .t { margin-top: -1px; }
.bm-apps { gap: 12px; width: 112px; }
.bm-grid { margin-right: 26px; }
.bm-list { display: flex; flex: none; width: 2081px; padding-left: 25px; }
.bm-list a { gap: 10px; width: 269.3px; letter-spacing: -.15px; }
.bm-list a:nth-child(1) { letter-spacing: -.33px; }
.bm-list a:nth-child(3) { width: 226px; gap: 12px; padding-left: 1px; letter-spacing: -.45px; }
.bm-list a:nth-child(4), .bm-list a:nth-child(5) { letter-spacing: -.54px; }
.giz { display: flex; flex-direction: column; width: 28px; height: 28px; padding: 1px 0 0 4px; font-size: 16px; letter-spacing: 0; background: linear-gradient(150deg, #6a80dd, #7c4dbb 45%, #e58af0); }
.giz small { height: 9px; font-size: 9px; line-height: 8px; font-weight: 700; }
.giz b { height: 17px; line-height: 14px; }
.more { margin-right: 30px; }
.bookmarks .all { margin-left: 28px; gap: 15px; letter-spacing: -.35px; }

/* Web page */
.page { display: grid; place-items: center; height: 1144px; flex: none; padding-left: 1px; background: linear-gradient(135deg, #8ec5fc, #e0c3fc); }
.card {
  display: flex;
  flex-direction: column;
  gap: 28px;
  width: 1338px;
  height: 820px;
  padding: 55px;
  border: 1px solid #d0d0d2;
  border-radius: 26px;
  background: #fff;
  box-shadow: 0 14px 28px rgba(0, 0, 0, .15);
  color: #212529;
}
.card h2 { margin: 0; height: 68px; padding-top: 2px; text-align: center; font-size: 55px; line-height: 67px; font-weight: 600; letter-spacing: -1.9px; color: #0d6efd; }
.field { position: relative; height: 393px; }
.input { height: 393px; padding: 12.5px 21px; border: 1px solid #86b7fe; border-radius: 10.5px; background: #fff; box-shadow: 0 0 0 7px #c2dbff; font-size: 30.2px; line-height: 46.2px; letter-spacing: -.55px; }
.input .t:nth-of-type(2) { letter-spacing: -.51px; }
.input .t:last-child { letter-spacing: -.42px; }
.grip { position: absolute; right: 3px; bottom: 2px; }
.process { height: 65px; border-radius: 10.5px; background: #0d6efd; color: #fff; font-size: 27.4px; letter-spacing: -.7px; }
.result { display: flex; align-items: center; height: 98px; padding: 0 29px; border-radius: 14px; background: #f7f7f7; font-size: 27.4px; font-weight: 700; letter-spacing: -.35px; }

/* Taskbar */
.taskbar {
  display: flex;
  align-items: center;
  height: 84px;
  flex: none;
  padding: 0 34px 0 36px;
  border-top: 2px solid #484245;
  background: linear-gradient(90deg, #222022 0, #222022 150px, #2a1c22 330px, #35182a 420px, #321a1c 540px, #2c1d1e 720px, #281f21 1000px, #262127 1100px, #2f1c1c 1220px, #36181a 1310px, #401516 1450px, #36191c 1570px, #2c1e1f 1680px, #2f1b1b 1760px, #381a1b 1860px, #421a13 2000px, #481715 2085px, #381b2a 2160px, #2f1f2c 2250px, #381c1c 2330px, #3d1a20 2390px, #261f20 2480px, #202223 2560px);
}
.search { display: flex; align-items: center; position: relative; width: 385px; height: 56px; margin-left: 23px; padding-left: 18px; gap: 18px; border: 1.500px solid rgba(255, 255, 255, .14); border-radius: 28px; background: rgba(255, 255, 255, .13); font-size: 24px; letter-spacing: -.5px; color: #d0cdd0; }
.search .t { margin-top: -2px; }
.tree { position: absolute; right: 5px; bottom: 3px; }
.apps { display: flex; margin-left: 4px; align-self: stretch; }
.app { position: relative; display: grid; place-items: center; width: 77px; }
.app.running::after, .app.current::after { content: ""; position: absolute; left: 33px; bottom: 9px; width: 11px; height: 5px; border-radius: 3px; background: #a19c9c; }
.app.current::after { left: 24px; width: 28px; background: #fa7e67; }
.app.current::before { content: ""; position: absolute; left: 3px; top: 5px; width: 71px; height: 70px; border-radius: 8px; border: 1.500px solid rgba(255, 255, 255, .06); background: linear-gradient(90deg, rgba(255, 255, 255, .08) 61px, rgba(255, 255, 255, .02) 62px); }
.teams-t { position: absolute; left: 17px; top: 30px; width: 21px; line-height: 22px; text-align: center; font-size: 17px; font-weight: 700; }
.badge { position: absolute; left: 39px; top: 10px; width: 28px; height: 28px; border-radius: 50%; background: #f47c63; color: #000; text-align: center; font-size: 20px; line-height: 28px; }
.profile { position: absolute; left: 39px; top: 10px; width: 28px; height: 28px; border-radius: 50%; background: #140c13; }
.weather { display: flex; align-items: center; gap: 13px; margin-left: auto; width: 286px; }
.lines { display: flex; flex-direction: column; padding-bottom: 5px; line-height: 28px; }
.dim { color: #cdc4c4; }
.tray { display: flex; align-items: center; }
.cloud { margin-left: 31px; }
.wifi { margin-left: 28px; }
.vol, .bat { margin-left: 14px; }
.clock { width: 124px; align-items: flex-end; }
```
